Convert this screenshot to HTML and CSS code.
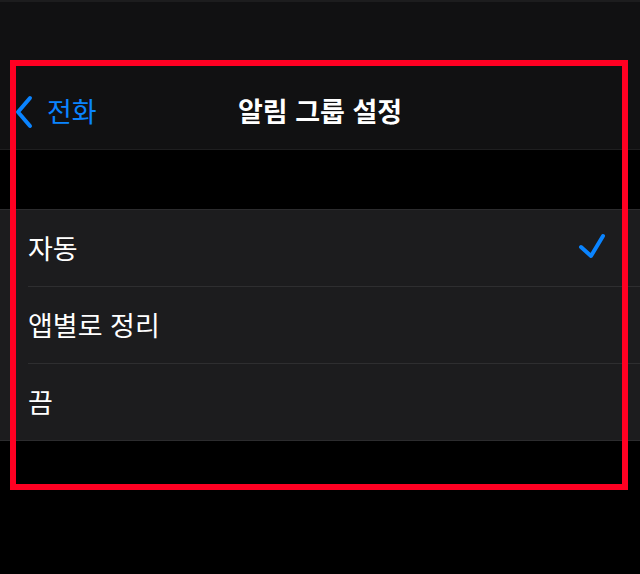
FILE: index.html
```html
<!DOCTYPE html>
<html lang="ko">
<head>
    <meta charset="UTF-8">
    <meta name="viewport" content="width=device-width, initial-scale=1.0">
    <title>알림 그룹 설정</title>
    <link rel="stylesheet" href="styles.css">
</head>
<body>
    <div class="screen">
        <!-- 상단 내비게이션 -->
        <header class="header">
            <div class="status-area"></div>
            <nav class="nav-bar">
                <a class="back-button" href="#">
                    <svg class="chevron" width="18" height="34" viewBox="0 0 18 34">
                        <path d="M15 3 L3 17 L15 31" fill="none" stroke="#0a84ff" stroke-width="4" stroke-linecap="round" stroke-linejoin="round"/>
                    </svg>
                    <span>전화</span>
                </a>
                <h1 class="nav-title">알림 그룹 설정</h1>
            </nav>
        </header>

        <div class="section-gap"></div>

        <!-- 옵션 목록 -->
        <ul class="option-list">
            <li class="option-row">
                <span class="option-label">자동</span>
                <svg class="check" width="28" height="26" viewBox="0 0 28 26">
                    <path d="M3 14 L13 23 L25 3" fill="none" stroke="#0a84ff" stroke-width="4" stroke-linecap="round" stroke-linejoin="round"/>
                </svg>
            </li>
            <li class="option-row">
                <span class="option-label">앱별로 정리</span>
            </li>
            <li class="option-row">
                <span class="option-label">끔</span>
            </li>
        </ul>

        <!-- 강조 표시 상자 -->
        <div class="highlight-box"></div>
    </div>
</body>
</html>
```

FILE: styles.css
```css
/* 페이지 기본 */
body {
    margin: 0;
    background-color: #000;
    font-family: "Noto Sans CJK KR", "Noto Sans", sans-serif;
    color: #fff;
}

.screen {
    position: relative;
    width: 640px;
    height: 574px;
    overflow: hidden;
    background-color: #000;
}

/* 헤더 */
.header {
    background-color: #111112;
    border-bottom: 1px solid #1e1e1f;
}

.status-area {
    height: 74px;
    border-top: 2px solid #1d1d1e;
    box-sizing: border-box;
}

.nav-bar {
    position: relative;
    height: 75px;
    display: flex;
    align-items: center;
    justify-content: center;
}

.back-button {
    position: absolute;
    left: 15px;
    top: 0;
    bottom: 0;
    display: flex;
    align-items: center;
    gap: 14px;
    color: #0a84ff;
    text-decoration: none;
    font-size: 27px;
    line-height: 1;
}

.back-button span {
    margin-top: -2px;
}

.nav-title {
    margin: 0;
    font-size: 27px;
    font-weight: bold;
    line-height: 1;
    margin-top: -2px;
}

.section-gap {
    height: 59px;
}

/* 옵션 목록 */
.option-list {
    list-style: none;
    margin: 0;
    padding: 0 0 0 28px;
    background-color: #1c1c1e;
    border-top: 1px solid #2c2c2e;
    border-bottom: 1px solid #2c2c2e;
}

.option-row {
    height: 76px;
    display: flex;
    align-items: center;
    justify-content: space-between;
    padding-right: 34px;
    border-bottom: 1px solid #2e2e30;
}

.option-row:last-child {
    border-bottom: none;
}

.option-label {
    font-size: 27px;
    line-height: 1;
    margin-top: -2px;
}

.check {
    margin-top: -4px;
}

/* 빨간 강조 상자 */
.highlight-box {
    position: absolute;
    left: 10px;
    top: 60px;
    width: 618px;
    height: 430px;
    border: 6px solid #ff0022;
    box-sizing: border-box;
    pointer-events: none;
}
```
